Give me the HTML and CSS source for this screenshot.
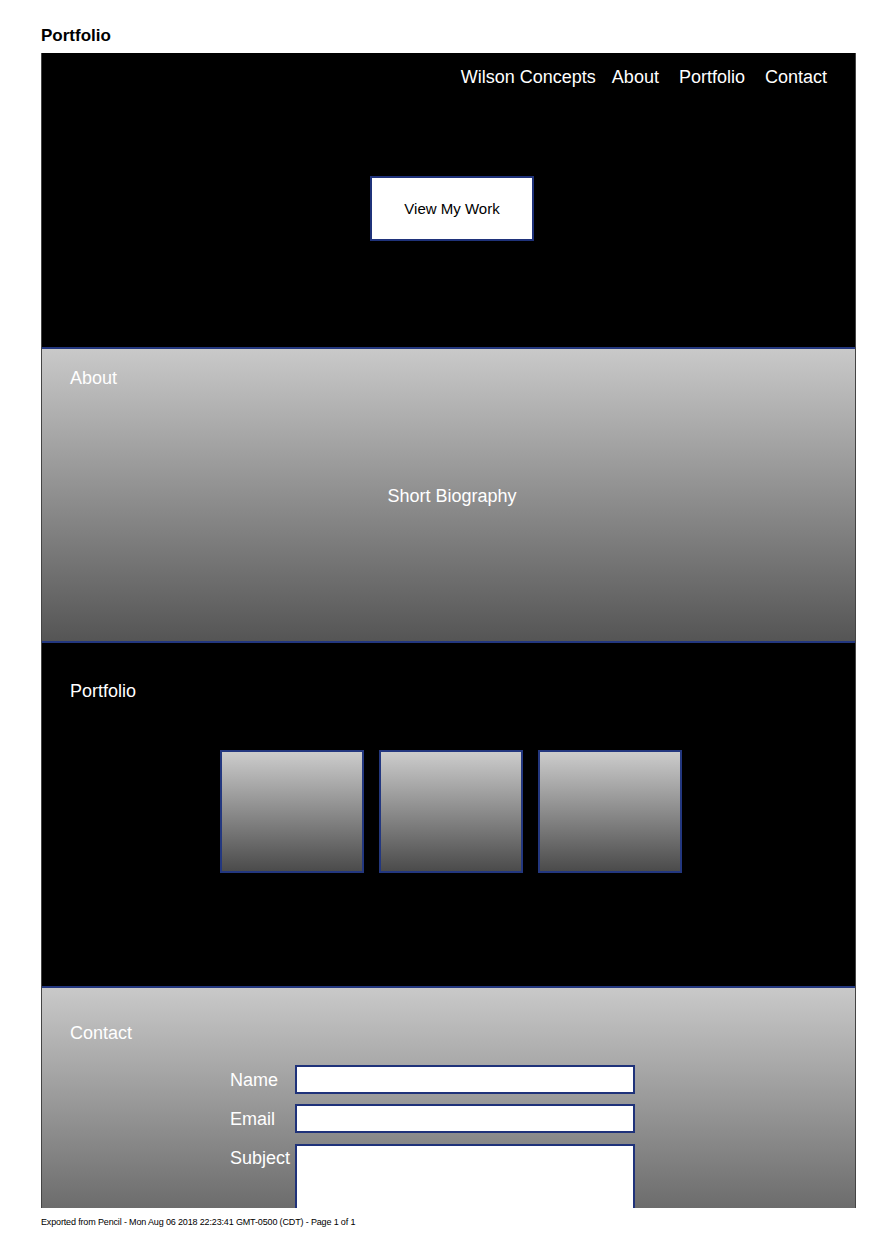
FILE: index.html
```html
<!DOCTYPE html>
<html lang="en">
<head>
    <meta charset="UTF-8">
    <meta name="viewport" content="width=device-width, initial-scale=1.0">
    <title>Portfolio</title>
    <link rel="stylesheet" href="styles.css">
</head>
<body>
    <div class="page">
        <h1 class="page-title">Portfolio</h1>

        <div class="frame">
            <!-- Hero -->
            <div class="hero">
                <nav class="nav">
                    <a href="#" class="brand">Wilson Concepts</a>
                    <a href="#">About</a>
                    <a href="#">Portfolio</a>
                    <a href="#">Contact</a>
                </nav>
                <button type="button" class="btn-work">View My Work</button>
            </div>

            <!-- About -->
            <div class="section section-about">
                <h2 class="section-title">About</h2>
                <p class="bio">Short Biography</p>
            </div>

            <!-- Portfolio -->
            <div class="section section-portfolio">
                <h2 class="section-title">Portfolio</h2>
                <div class="works">
                    <div class="work"></div>
                    <div class="work"></div>
                    <div class="work"></div>
                </div>
            </div>

            <!-- Contact -->
            <div class="section section-contact">
                <h2 class="section-title">Contact</h2>
                <form class="contact-form">
                    <label for="name">Name</label>
                    <input type="text" id="name" class="field">
                    <label for="email">Email</label>
                    <input type="email" id="email" class="field">
                    <label for="subject">Subject</label>
                    <textarea id="subject" class="field field-area"></textarea>
                </form>
            </div>
        </div>

        <p class="export-note">Exported from Pencil - Mon Aug 06 2018 22:23:41 GMT-0500 (CDT) - Page 1 of 1</p>
    </div>
</body>
</html>
```
FILE: styles.css
```css
body {
    font-family: 'Liberation Sans', Arial, sans-serif;
    background-color: #fff;
    margin: 0;
    padding: 0;
    color: #000;
}
.page {
    width: 815px;
    padding: 26px 0 0 41px;
}
.page-title {
    margin: 0 0 7px;
    font-size: 17px;
    line-height: 20px;
    font-weight: bold;
}
.frame {
    height: 1155px;
    overflow: hidden;
    border-left: 1px solid #444;
    border-right: 1px solid #444;
    background-color: #000;
    color: #fff;
}
.hero {
    height: 294px;
    background-color: #000;
    display: flex;
    flex-direction: column;
    align-items: center;
}
.nav {
    align-self: flex-end;
    display: flex;
    gap: 20px;
    padding: 13px 28px 0 0;
    font-size: 18px;
    line-height: 22px;
}
.nav a {
    color: #fff;
    text-decoration: none;
}
.nav .brand {
    margin-right: -4px;
}
.btn-work {
    margin: 88px 0 0 7px;
    width: 164px;
    height: 65px;
    background-color: #fff;
    border: 2px solid #1f327a;
    font-family: inherit;
    font-size: 15px;
    color: #000;
    cursor: pointer;
}
.section {
    padding: 0 28px;
}
.section-title {
    margin: 0;
    font-size: 18px;
    line-height: 22px;
    font-weight: normal;
}
.section-about {
    height: 292px;
    border-top: 2px solid #23377f;
    border-bottom: 2px solid #23377f;
    background: linear-gradient(#c9c9c9, #555);
    display: grid;
    grid-template-rows: 1fr auto 1fr;
}
.section-about .section-title {
    padding-top: 18px;
}
.bio {
    margin: 2px 0 0 7px;
    text-align: center;
    font-size: 18px;
    line-height: 22px;
}
.section-portfolio {
    height: 306px;
    padding-top: 37px;
    background-color: #000;
}
.works {
    display: flex;
    justify-content: center;
    gap: 15px;
    margin: 48px 0 0 4px;
}
.work {
    width: 140px;
    height: 119px;
    border: 2px solid #23377f;
    background: linear-gradient(#cccccc, #4b4b4b);
}
.section-contact {
    height: 300px;
    padding-top: 34px;
    border-top: 2px solid #23377f;
    background: linear-gradient(#c9c9c9, #3c3c3c);
}
.contact-form {
    display: grid;
    grid-template-columns: 65px 340px;
    row-gap: 10px;
    margin: 21px 0 0 160px;
}
.contact-form label {
    font-size: 18px;
    line-height: 22px;
    padding-top: 4px;
}
.field {
    box-sizing: border-box;
    height: 29px;
    margin: 0;
    border: 2px solid #1f327a;
    background-color: #fff;
    font-family: inherit;
}
.field-area {
    height: 100px;
    margin-top: 1px;
    resize: none;
}
.export-note {
    margin: 8px 0 0;
    font-size: 9px;
    line-height: 12px;
    letter-spacing: -0.15px;
}
```
